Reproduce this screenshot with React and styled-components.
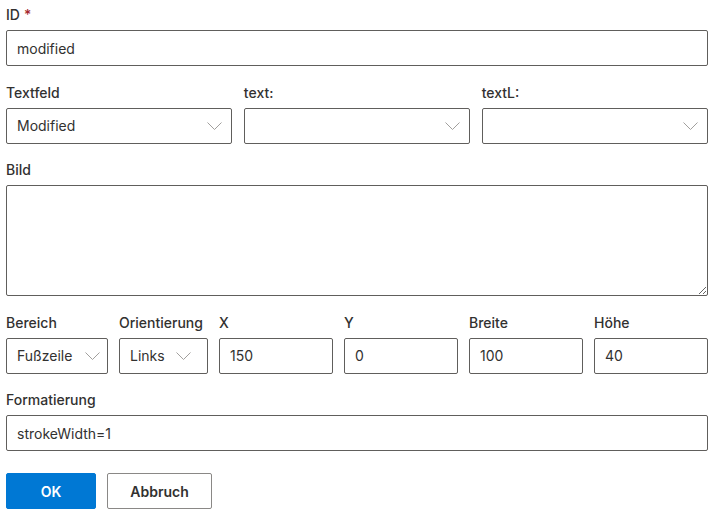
import React from "react";
import styled, { createGlobalStyle } from "styled-components";

const Global = createGlobalStyle`
  html, body { margin: 0; padding: 0; background: #ffffff; }
  body { font-family: Inter, Roboto, "Noto Sans", sans-serif; color: #323130; }
  * { box-sizing: border-box; }
`;

const Form = styled.form`
  display: flex;
  flex-direction: column;
  gap: 11.5px;
  padding: 0 7px 0 6px;
  width: 715px;
`;

const Field = styled.div`
  display: flex;
  flex-direction: column;
  min-width: 0;
`;

const Label = styled.label`
  display: block;
  padding: 5px 0;
  font-size: 14px;
  line-height: 20px;
  font-weight: 500;
  color: #323130;
  white-space: nowrap;
`;

const Required = styled.span`
  color: #a4262c;
  margin-left: 4px;
`;

const Input = styled.input`
  height: 36px;
  width: 100%;
  border: 1px solid #605e5c;
  border-radius: 2px;
  padding: 0 10px;
  font-family: inherit;
  font-size: 14px;
  color: #323130;
  background: #fff;
  outline: none;
`;

const TextArea = styled.textarea`
  display: block;
  height: 111px;
  width: 100%;
  border: 1px solid #605e5c;
  border-radius: 2px;
  padding: 6px 10px;
  font-family: inherit;
  font-size: 14px;
  resize: vertical;
  outline: none;
`;

const Select = styled.div`
  height: 36px;
  display: flex;
  align-items: center;
  border: 1px solid #605e5c;
  border-radius: 2px;
  padding: 0 ${(p) => p.$chevronGap ?? 9}px 0 10px;
  font-size: 14px;
  color: #323130;
  background: #fff;
`;

const SelectText = styled.span`
  flex: 1;
  white-space: nowrap;
  overflow: hidden;
`;

const Chevron = () => (
  <svg width="15" height="8" viewBox="0 0 15 8" fill="none">
    <path d="M0.5 0.5 L7.5 7.5 L14.5 0.5" stroke="#a19f9d" strokeWidth="1" />
  </svg>
);

const ThreeCols = styled.div`
  display: grid;
  grid-template-columns: repeat(3, 1fr);
  gap: 11.5px;
`;

const PositionRow = styled.div`
  display: grid;
  grid-template-columns: 102px 89px repeat(4, 1fr);
  gap: 11px;
`;

const Buttons = styled.div`
  display: flex;
  gap: 11px;
  margin-top: 10.5px;
`;

const Button = styled.button`
  height: 36px;
  border-radius: 2px;
  font-family: inherit;
  font-size: 14px;
  font-weight: 600;
  padding: 0 20px;
  cursor: pointer;
  border: 1px solid ${(p) => (p.$primary ? "#0078d4" : "#8a8886")};
  background: ${(p) => (p.$primary ? "#0078d4" : "#ffffff")};
  color: ${(p) => (p.$primary ? "#ffffff" : "#323130")};
  width: ${(p) => p.$w}px;
`;

const Dropdown = ({ value, chevronGap }) => (
  <Select $chevronGap={chevronGap}>
    <SelectText>{value}</SelectText>
    <Chevron />
  </Select>
);

export default function App() {
  return (
    <>
      <Global />
      <Form onSubmit={(e) => e.preventDefault()}>
        <Field>
          <Label>
            ID<Required>*</Required>
          </Label>
          <Input defaultValue="modified" />
        </Field>
        <ThreeCols>
          <Field>
            <Label>Textfeld</Label>
            <Dropdown value="Modified" />
          </Field>
          <Field>
            <Label>text:</Label>
            <Dropdown value="" />
          </Field>
          <Field>
            <Label>textL:</Label>
            <Dropdown value="" />
          </Field>
        </ThreeCols>
        <Field>
          <Label>Bild</Label>
          <TextArea />
        </Field>
        <PositionRow>
          <Field>
            <Label>Bereich</Label>
            <Dropdown value="Fußzeile" chevronGap={7} />
          </Field>
          <Field>
            <Label>Orientierung</Label>
            <Dropdown value="Links" chevronGap={16} />
          </Field>
          <Field>
            <Label>X</Label>
            <Input defaultValue="150" />
          </Field>
          <Field>
            <Label>Y</Label>
            <Input defaultValue="0" />
          </Field>
          <Field>
            <Label>Breite</Label>
            <Input defaultValue="100" />
          </Field>
          <Field>
            <Label>Höhe</Label>
            <Input defaultValue="40" />
          </Field>
        </PositionRow>
        <Field>
          <Label>Formatierung</Label>
          <Input defaultValue="strokeWidth=1" />
        </Field>
        <Buttons>
          <Button type="submit" $primary $w={90}>OK</Button>
          <Button type="button" $w={105}>Abbruch</Button>
        </Buttons>
      </Form>
    </>
  );
}
